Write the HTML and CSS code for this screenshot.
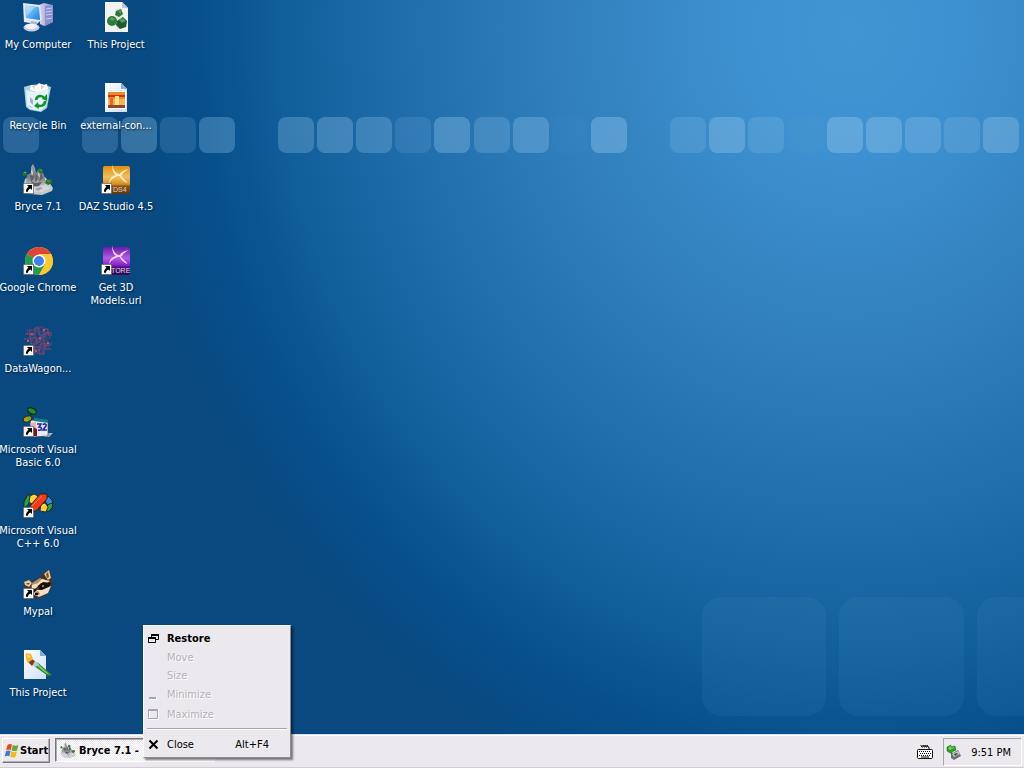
FILE: index.html
```html
<!DOCTYPE html>
<html lang="en">
<head>
<meta charset="utf-8">
<title>Desktop</title>
<link rel="stylesheet" href="styles.css">
</head>
<body>
<svg class="defs" aria-hidden="true">
  <defs>
    <linearGradient id="screen" x1="0" y1="0" x2="1" y2="1"><stop offset="0" stop-color="#b9e2fb"/><stop offset=".5" stop-color="#5bb0ee"/><stop offset="1" stop-color="#1c7cd8"/></linearGradient>
    <linearGradient id="tower" x1="0" x2="1"><stop offset="0" stop-color="#d9d8f4"/><stop offset="1" stop-color="#8386c6"/></linearGradient>
    <linearGradient id="paper" x1="0" y1="0" x2="1" y2="1"><stop offset="0" stop-color="#fff"/><stop offset="1" stop-color="#cfdff6"/></linearGradient>
    <linearGradient id="gold" x1="0" y1="0" x2="0" y2="1"><stop offset="0" stop-color="#e08e10"/><stop offset=".4" stop-color="#f3bd5c"/><stop offset=".65" stop-color="#d98f20"/><stop offset=".72" stop-color="#8a5410"/><stop offset="1" stop-color="#5c370c"/></linearGradient>
    <linearGradient id="violet" x1="0" y1="0" x2="0" y2="1"><stop offset="0" stop-color="#6a1aa8"/><stop offset=".4" stop-color="#b45be8"/><stop offset=".65" stop-color="#8a1ecb"/><stop offset=".72" stop-color="#4a1384"/><stop offset="1" stop-color="#2e0a5a"/></linearGradient>
    <linearGradient id="rock" x1="0" y1="0" x2="0" y2="1"><stop offset="0" stop-color="#a3a6b0"/><stop offset=".5" stop-color="#777a7c"/><stop offset="1" stop-color="#c9cbcd"/></linearGradient>
    <symbol id="shortcut" viewBox="0 0 11 11"><path fill="#fff" stroke="#222" stroke-width=".6" d="M.3.3h10.400v10.400H.3z"/><path d="M4 2h5v5L7.400 5.500C5.500 6.600 4.800 7.700 4.600 9.300L3 8.600C2.700 6.600 3.800 4.900 5.500 3.700z"/></symbol>
    <symbol id="bryce" viewBox="0 0 32 32"><path fill="#c6c8c7" d="M1 24l2-8 8-4 12 2 4 5 4 6-1 3-10 4-12-1z"/><path fill="url(#rock)" d="M4 21l1-9 4-2V4l2-3 2 4 1 5 3-4 2 1 3 5 2 8-6 5-7-3z"/><path fill="#5e6165" d="M8 13l3-3 1 5-3 4zm6-2l2 5-3 3zm5-1l2 5-4 4zM9 18l4 2 7-1-4 5-5-1z"/><path fill="#d6d6da" d="M10 5l1 6-1 2-1-4zm7 3l1 7-2-3zM3 22l10 2 9-2 7 3-9 4H5z"/><path fill="#a0a2a5" d="M13 26l5-2 3 1-5 3z"/><path fill="#28752c" d="M1 9l3-1 1 4-4 1zm16-4l4 2-1 4-4-2zm7 12l5-1 1 4-4 2-3-2z"/><path fill="#58ad4c" d="M2 9h2v1H2zm16-3l2 1v1l-2-1zm7 11l3 1-2 1z"/></symbol>
    <symbol id="flag" viewBox="0 0 16 15"><path fill="#e04c1e" d="M3.500 2C5 .7 6.700.8 8 1.600L6.800 7C5.300 6.200 3.800 6.200 2.200 7.300z"/><path fill="#68a92c" d="M8.800 2c1.800.9 3.500.9 5.600-.1L13 7.400c-1.800 1-3.700.9-5.400 0z"/><path fill="#347ed8" d="M2 8.200c1.600-1 3-1 4.600-.2l-1.300 5.300c-1.400-.9-2.900-.9-4.700.2z"/><path fill="#f4b91a" d="M7.400 8.400c1.800.9 3.500 1 5.400.1L11.500 14c-1.800.8-3.600.6-5.300-.4z"/></symbol>
  </defs>
</svg>

<main class="desktop">
  <svg class="wallpaper" viewBox="0 0 1024 734" preserveAspectRatio="xMaxYMin slice" aria-hidden="true">
    <defs><radialGradient id="sky" gradientUnits="userSpaceOnUse" cx="0" cy="0" r="1" gradientTransform="translate(850 30) scale(730 810)">
      <stop offset="0" stop-color="#4195d3"/><stop offset=".15" stop-color="#3e91d0"/><stop offset=".4" stop-color="#317fbd"/><stop offset=".62" stop-color="#206dab"/><stop offset=".78" stop-color="#105e9a"/><stop offset=".89" stop-color="#07508c"/><stop offset="1" stop-color="#094980"/>
    </radialGradient></defs>
    <path fill="url(#sky)" d="M0 0h1024v734H0z"/>
    <g fill="#a0cff0">
      <rect x="3" y="117" width="36" height="36" rx="8" opacity=".22"/>
      <rect x="82" y="117" width="36" height="36" rx="8" opacity=".22"/>
      <rect x="121" y="117" width="36" height="36" rx="8" opacity=".3"/>
      <rect x="160" y="117" width="36" height="36" rx="8" opacity=".17"/>
      <rect x="199" y="117" width="36" height="36" rx="8" opacity=".29"/>
      <rect x="278" y="117" width="36" height="36" rx="8" opacity=".28"/>
      <rect x="317" y="117" width="36" height="36" rx="8" opacity=".31"/>
      <rect x="356" y="117" width="36" height="36" rx="8" opacity=".27"/>
      <rect x="395" y="117" width="36" height="36" rx="8" opacity=".14"/>
      <rect x="434" y="117" width="36" height="36" rx="8" opacity=".32"/>
      <rect x="474" y="117" width="36" height="36" rx="8" opacity=".23"/>
      <rect x="513" y="117" width="36" height="36" rx="8" opacity=".29"/>
      <rect x="552" y="117" width="36" height="36" rx="8" opacity=".03"/>
      <rect x="591" y="117" width="36" height="36" rx="8" opacity=".35"/>
      <rect x="670" y="117" width="36" height="36" rx="8" opacity=".19"/>
      <rect x="709" y="117" width="36" height="36" rx="8" opacity=".33"/>
      <rect x="748" y="117" width="36" height="36" rx="8" opacity=".19"/>
      <rect x="788" y="117" width="36" height="36" rx="8" opacity=".04"/>
      <rect x="827" y="117" width="36" height="36" rx="8" opacity=".35"/>
      <rect x="866" y="117" width="36" height="36" rx="8" opacity=".33"/>
      <rect x="905" y="117" width="36" height="36" rx="8" opacity=".27"/>
      <rect x="944" y="117" width="36" height="36" rx="8" opacity=".2"/>
      <rect x="983" y="117" width="36" height="36" rx="8" opacity=".31"/>
    </g>
    <g fill="#7fb9e2" stroke="#7fb9e2" stroke-opacity=".3" opacity=".07">
      <rect x="702" y="597" width="124" height="119" rx="20"/><rect x="839" y="597" width="125" height="119" rx="20"/><rect x="977" y="597" width="125" height="119" rx="20"/>
    </g>
  </svg>

  <ul class="icons">
    <li><a class="icon" href="#computer">
      <svg viewBox="0 0 32 32"><path fill="url(#tower)" d="M17 4l5-2 9 2v17l-9 4-4-2z"/><path fill="#8d90cc" d="M23 5l8-1v17l-8 4z"/><path stroke="#c9caee" d="M24 8l6-1m-6 4l6-1m-6 4l6-1m-6 5l6-1"/><path fill="#e3e9f5" d="M1 2l17 2 2 14-5 5-13-2z"/><path fill="url(#screen)" d="M3 4l14 2 1 13-14-2z"/><path fill="#fff" opacity=".3" d="M4 5l9 1-8 9z"/><path fill="#a7b3d4" d="M9 20l6 1v5H8z"/><ellipse cx="9.500" cy="26.500" rx="8" ry="4" fill="#c5cee5"/><ellipse cx="9" cy="25.500" rx="6" ry="2.700" fill="#f2f5fc"/></svg>
      <span>My Computer</span></a></li>
    <li><a class="icon" href="#recycle">
      <svg viewBox="0 0 32 32"><path fill="#a9d3df" d="M2 5l7-2 11-1 9 3-4 21-6 4-11-2-4-3z"/><path fill="#e4f3f9" d="M4 8l8 2 15-3-4 18-5 4-10-2-3-4z"/><path fill="#fff" d="M9 3l5 1 3-3 4 2 4-1 1 5-11 3-7-2z"/><path fill="#f3c9a8" d="M10 4l3 0-1 4zm9-1l3 2-3 3z"/><path fill="#9ca8df" d="M8 15l3 3v5l-3-3zm-1 8l4 3-3-1z"/><path fill="none" stroke="#159329" stroke-width="2.600" d="M14 18c1-5 6-5 8-2m1 3c0 5-5 6-8 4"/><path fill="#159329" d="M20 17l5-5v7zm-4 3l-4 4 5 3z"/></svg>
      <span>Recycle Bin</span></a></li>
    <li><a class="icon" href="#bryce"><svg viewBox="0 0 32 32"><use href="#bryce"/><use href="#shortcut" x="1" y="20" width="11" height="11"/></svg><span>Bryce 7.1</span></a></li>
    <li><a class="icon" href="#chrome">
      <svg viewBox="0 0 32 32"><circle cx="17" cy="17" r="14" fill="#fbc92f"/><path fill="#df4335" d="M17 17L4.900 10A14 14 0 0 1 29.100 10H17z"/><path fill="#279a52" d="M4.900 10A14 14 0 0 0 17 31l6-10.500-6-3.500z"/><path fill="#fbc92f" d="M17 31a14 14 0 0 0 12.100-21H17l6 10.500z"/><circle cx="17" cy="17" r="6.500" fill="#fff"/><circle cx="17" cy="17" r="5" fill="#3f80ec"/><use href="#shortcut" x="1" y="20" width="11" height="11"/></svg>
      <span>Google Chrome</span></a></li>
    <li><a class="icon" href="#datawagon">
      <svg viewBox="0 0 32 32"><g fill="none" stroke="#a04a70" opacity=".85"><path d="M8 4v6h5V3h4v7h5V4h4v6h4M3 9h5v4h6v4h4v-5h5v-4h7M2 14h7v5h6v-5h7v5h8M4 21h9v4h5v-6h5v5h6M12 29v-7h5v7h5v-8h6"/></g><g fill="none" stroke="#793c6c" opacity=".9"><path d="M5 5h7v4H6zm10-3h6v5h-6zm9 5h4v6h-4zM11 12h4v5h-4zm8 3h6v6h-6zM13 22h7v6h-7z"/></g><path fill="#c0566e" d="M9 8h2v2H9zm8 4h2v2h-2zm8 5h2v2h-2zm-12 8h2v2h-2zm8-21h2v2h-2zM5 15h2v2H5z"/><use href="#shortcut" x="1" y="20" width="11" height="11"/></svg>
      <span>DataWagon...</span></a></li>
    <li><a class="icon" href="#vb">
      <svg viewBox="0 0 32 32"><path fill="#aab1c5" d="M25 27h6l-4 4h-5z"/><path fill="#e9e9f3" stroke="#333" stroke-width=".6" d="M8 14l18 1v15l-15 1z"/><path fill="#188080" d="M12 12l14 2v3l-14-2z"/><path fill="#e2b4b4" d="M8 17l6-1v6H9z"/><path fill="#7a1420" d="M11 21l4 2v7h-4z"/><path fill="none" stroke="#111" d="M7 11l4-5"/><ellipse cx="10" cy="5" rx="4.600" ry="2.800" transform="rotate(25 10 5)" fill="#258d25" stroke="#0a2c0a"/><ellipse cx="5.500" cy="13" rx="4.500" ry="2.800" transform="rotate(-20 5.500 13)" fill="#a3a326" stroke="#292a08"/><path fill="#3dae35" d="M5 12l4-1-2 3z"/><path fill="none" stroke="#2226bd" stroke-width="1.600" d="M15 18h4l-2 3c4 0 3 4-1 3m5-5c1-2 4-1 3 1l-3 4h4"/><use href="#shortcut" x="1" y="20" width="11" height="11"/></svg>
      <span>Microsoft Visual<br>Basic 6.0</span></a></li>
    <li><a class="icon" href="#vc">
      <svg viewBox="0 0 32 32"><g stroke="#171717" stroke-width=".8"><path fill="#2aa543" d="M2 15l3-6 3-2v7l-3 5-3 2z"/><path fill="#ffd438" d="M8 9l4-2 4 2-1 6-5 2-3-2z"/><path fill="#388bd4" d="M26 9l4 4 1 4-4 3-4-6z"/><path fill="#2da542" d="M27 17l4-1-1 5-4 4-3-4z"/><path fill="#ffd23a" d="M19 17l4-1 3 4-2 5-6-1z"/><path fill="#f43b16" d="M18 7h7v5L14 24H8v-5z"/></g><path stroke="#ff7950" d="M10 19L20 9"/><use href="#shortcut" x="1" y="20" width="11" height="11"/></svg>
      <span>Microsoft Visual<br>C++ 6.0</span></a></li>
    <li><a class="icon" href="#mypal">
      <svg viewBox="0 0 32 32"><path fill="#4a3324" d="M3 14l3-2 5 2 6-4 5-6 6-2 2 8v9l-5 8-9 4-9-5-3-7-3-2z"/><path fill="#e4c8a0" d="M2 14l5-2 3 3-3 4-4-2zm20-8l5-4 2 8-3 2z"/><path fill="#76543d" d="M4 15l4 0-2 2zm20-9l2-2 1 5-2 1z"/><path fill="#b68c64" d="M10 15l8-5 5 2-9 4-5 4z"/><path fill="#f1dfc1" d="M10 17l6-2 4-4 8 2-3 2-6 0-5 5-4 2z"/><path fill="#17110e" d="M16 18l5-4 8 1-3 6-8 1zm-6 4l4-1 1 3-4 0z"/><path fill="#efe0ce" d="M15 22l5 0 9-4-3 7-9 4-6-3z"/><path fill="#ac765b" d="M12 25l4-2 2 3-3 2z"/><path fill="#111" d="M13 25h3v2h-3z"/><circle cx="21" cy="18" r="1" fill="#c79467"/><use href="#shortcut" x="1" y="20" width="11" height="11"/></svg>
      <span>Mypal</span></a></li>
    <li><a class="icon" href="#project">
      <svg viewBox="0 0 32 32"><path fill="url(#paper)" d="M2 1h16l6 6v23H2z"/><path fill="#7cabd8" d="M18 1v6h6z"/><path fill="#398136" d="M15 13l15 13-4 1L12 17z"/><path fill="#77ce58" d="M16 15l11 10-2 0-10-8z"/><path fill="#bbc8dd" d="M11 12l4 1 2 3-4 2-4-3z"/><path fill="#82371d" d="M8 9l5 3-3 5-4-4z"/><path fill="#f3b629" d="M4 4l5 1 2 5-5 4c-2-3-3-6-2-10z"/><path fill="#ffe070" d="M5 5l4 3-3 1z"/></svg>
      <span>This Project</span></a></li>
  </ul>
  <ul class="icons">
    <li><a class="icon" href="#project-image">
      <svg viewBox="0 0 32 32"><path fill="#f1f4f2" d="M5 1h17l6 6v24H5z"/><path fill="#b9c8da" d="M22 1v6h6z"/><path fill="#dce9da" d="M15 8l5-1 7 17-10 5z"/><path fill="#327344" d="M16 10l5-2 2 5-4 3-4-2z"/><circle cx="12" cy="20" r="5" fill="#2c7c3c"/><path fill="#1c5c2c" d="M17 20l6-4 4 4-1 6-6 2-4-4z"/><path fill="#5a9a5e" d="M9 18l3-2 3 2-2 2zm9-8l3-1v4zm1 9l4-2 3 3-4 2z"/></svg>
      <span>This Project</span></a></li>
    <li><a class="icon" href="#external">
      <svg viewBox="0 0 32 32"><path fill="url(#paper)" d="M5 1h16l6 6v23H5z"/><path fill="#86afe0" d="M21 1v6h6z"/><path fill="#fff" d="M7 9h19v18H7z"/><path fill="#ed8a27" d="M8 10h17v16H8z"/><path fill="#f8b157" d="M8 17h17v7H8z"/><path fill="#c93417" d="M8 13h17v2H8z"/><path fill="#dd6a2c" d="M10 16h3v8h-3z"/><path fill="#ffe58a" d="M15 14h4v9h-4z"/><path fill="#96452c" d="M8 23h17v3H8z"/></svg>
      <span>external-con...</span></a></li>
    <li><a class="icon" href="#daz">
      <svg viewBox="0 0 32 32"><rect x="3" y="3" width="27" height="28" rx="2" fill="url(#gold)"/><path fill="#fff3cf" d="M12 1c1 7 4 10 10 11-6 1-10 3-13 8 1-5 3-7 7-8-3-2-4-6-4-11zm7 11c3-4 5-5 10-6-4 2-6 4-8 7l7 7c-4-1-7-4-9-8z"/><text class="badge-text" x="13" y="29">DS4</text><use href="#shortcut" x="1" y="20" width="11" height="11"/></svg>
      <span>DAZ Studio 4.5</span></a></li>
    <li><a class="icon" href="#models">
      <svg viewBox="0 0 32 32"><rect x="3" y="3" width="27" height="28" rx="2" fill="url(#violet)"/><path fill="#f6dcff" d="M12 1c1 7 4 10 10 11-6 1-10 3-13 8 1-5 3-7 7-8-3-2-4-6-4-11zm7 11c3-4 5-5 10-6-4 2-6 4-8 7l7 7c-4-1-7-4-9-8z"/><text class="badge-text" x="11" y="29">TORE</text><use href="#shortcut" x="1" y="20" width="11" height="11"/></svg>
      <span>Get 3D<br>Models.url</span></a></li>
  </ul>
</main>

<footer class="taskbar">
  <button class="start" type="button"><svg viewBox="0 0 16 15" aria-hidden="true"><use href="#flag"/></svg>Start</button>
  <div class="task-slot">
    <button class="task" type="button"><svg viewBox="0 0 32 32" aria-hidden="true"><use href="#bryce"/></svg><span>Bryce 7.1 -</span></button>
    <div class="menu" role="menu">
      <button type="button" role="menuitem" class="item default"><svg viewBox="0 0 11 11"><path fill="none" stroke="#000" d="M3.500 4V1.500h7v5H8M.5 4.500h7v5h-7z"/><path d="M3 1h8v2H3zM0 4h8v2H0z"/></svg><span>Restore</span></button>
      <button type="button" role="menuitem" class="item short" disabled><svg viewBox="0 0 11 11"></svg><span>Move</span></button>
      <button type="button" role="menuitem" class="item short" disabled><svg viewBox="0 0 11 11"></svg><span>Size</span></button>
      <button type="button" role="menuitem" class="item" disabled><svg viewBox="0 0 11 11"><path fill="#fff" d="M2 9h7v2H2z"/><path fill="#a7a6aa" d="M1 8h7v2H1z"/></svg><span>Minimize</span></button>
      <button type="button" role="menuitem" class="item" disabled><svg viewBox="0 0 11 11"><path fill="none" stroke="#fff" d="M1.500 1.500h9v9h-9z"/><path fill="none" stroke="#a7a6aa" d="M.5.5h9v9h-9zM1 1.500h8"/></svg><span>Maximize</span></button>
      <hr>
      <button type="button" role="menuitem" class="item tall"><svg viewBox="0 0 11 11"><path fill="none" stroke="#000" stroke-width="2" d="M1.500 1.500l8 8m0-8l-8 8"/></svg><span>Close</span><kbd>Alt+F4</kbd></button>
    </div>
  </div>
  <svg class="keyboard" viewBox="0 0 16 16" aria-label="Keyboard"><path fill="none" stroke="#111" d="M4 1v1l1 1h1V1l1 2h1V1l1 2h1V1l1 2h1v2"/><rect x=".5" y="5.500" width="15" height="9" rx="1" fill="#fff" stroke="#111"/><path stroke="#111" stroke-dasharray="1 1" d="M2 7.500h12M3 9.500h11M2 11.500h12"/><path stroke="#111" d="M4 13h8"/></svg>
  <div class="tray">
    <svg viewBox="0 0 16 16" aria-label="Safely remove hardware"><path fill="#6c7074" d="M5 10l7-4 3 6-7 4-3-2z"/><path fill="#c3c7ca" d="M6 10l6-3 2 3-6 3z"/><path fill="#454a4d" d="M8 10l3-1 1 1-3 2z"/><path fill="#2c9c2b" stroke="#176b1a" stroke-width=".5" d="M1 3l4-2v2l4-1 1 4-4 2v2L1 7z"/><path fill="#77d557" d="M2 4l3-2v2l3-1v1L4 6z"/></svg>
    <time>9:51 PM</time>
  </div>
</footer>
</body>
</html>
```

FILE: styles.css
```css
* { box-sizing: border-box; }

body {
  margin: 0;
  min-height: 100vh;
  display: flex;
  flex-direction: column;
  background: #094980;
  font-family: "DejaVu Sans Condensed", "Noto Sans", sans-serif;
  font-size: 11px;
  line-height: 13px;
}

button {
  font: inherit;
  color: #000;
  margin: 0;
  padding: 0;
}

svg { flex: none; display: block; }

.defs { position: absolute; width: 0; height: 0; }

.desktop {
  position: relative;
  flex: 1;
  display: flex;
  gap: 2px;
}

.wallpaper {
  position: absolute;
  inset: 0;
  width: 100%;
  height: 100%;
}

.icons {
  position: relative;
  list-style: none;
  margin: 0;
  padding: 0;
  width: 76px;
}

.icons li { height: 81px; }

.icon {
  display: flex;
  flex-direction: column;
  align-items: center;
  gap: 5px;
  padding-top: 1px;
  color: #fff;
  text-align: center;
  text-decoration: none;
  white-space: nowrap;
  text-shadow: 1px 1px 2px #002040;
}

.icons li:last-child { height: auto; }

.icon svg { width: 32px; height: 32px; }

.badge-text {
  fill: #e3d2c8;
  font: 7px "Liberation Sans", sans-serif;
  text-shadow: none;
}

.taskbar {
  display: flex;
  align-items: flex-start;
  height: 34px;
  padding: 3px 2px 2px;
  background: #ebe9ed;
  border-top: 1px solid #d8dfe8;
  box-shadow: inset 0 1px #fff, inset 0 -1px #d0ced2;
}

.start {
  display: flex;
  align-items: center;
  height: 25px;
  width: 48px;
  padding-left: 1px;
  background: #ebe9ed;
  border: 1px solid;
  border-color: #fff #77757a #77757a #fff;
  box-shadow: inset -1px -1px #b0aeb3;
  font-weight: bold;
}

.start svg { width: 16px; height: 15px; }

.task-slot {
  position: relative;
  flex: 1;
  margin-left: 5px;
}

.task {
  display: flex;
  align-items: center;
  gap: 3px;
  width: 160px;
  height: 24px;
  padding-left: 4px;
  background: repeating-conic-gradient(#fff 0 25%, #ebe9ed 0 50%) 0 0 / 2px 2px;
  border: 1px solid;
  border-color: #77757a #fff #fff #77757a;
  box-shadow: inset 1px 1px #b0aeb3;
  font-weight: bold;
}

.task svg { width: 16px; height: 16px; }

.menu {
  position: absolute;
  left: 88px;
  bottom: 4px;
  width: 148px;
  padding: 2px;
  background: #ebe9ed;
  border: 1px solid;
  border-color: #f7f6f8 #8e8c91 #8e8c91 #f7f6f8;
  box-shadow: 2px 2px 2px rgba(0, 0, 0, .5);
}

.item {
  display: flex;
  align-items: center;
  gap: 8px;
  width: 100%;
  height: 20px;
  padding: 0 19px 0 2px;
  background: none;
  border: 0;
  text-align: left;
}

.item svg { width: 11px; height: 11px; }
.item:disabled { color: #b4b2b7; text-shadow: 1px 1px #fff; }
.short { height: 18px; }
.tall { height: 22px; }
.default { font-weight: bold; }

kbd { margin-left: auto; font: inherit; }

hr {
  margin: 4px 1px 3px;
  border: 0;
  border-top: 1px solid #a7a6aa;
  border-bottom: 1px solid #fff;
}

.keyboard {
  align-self: center;
  width: 16px;
  height: 16px;
  margin-right: 10px;
}

.tray {
  display: flex;
  align-items: center;
  align-self: stretch;
  gap: 9px;
  padding: 0 10px 0 2px;
  border: 1px solid;
  border-color: #a7a6aa #fff #fff #a7a6aa;
}

.tray svg { width: 16px; height: 16px; }
```
